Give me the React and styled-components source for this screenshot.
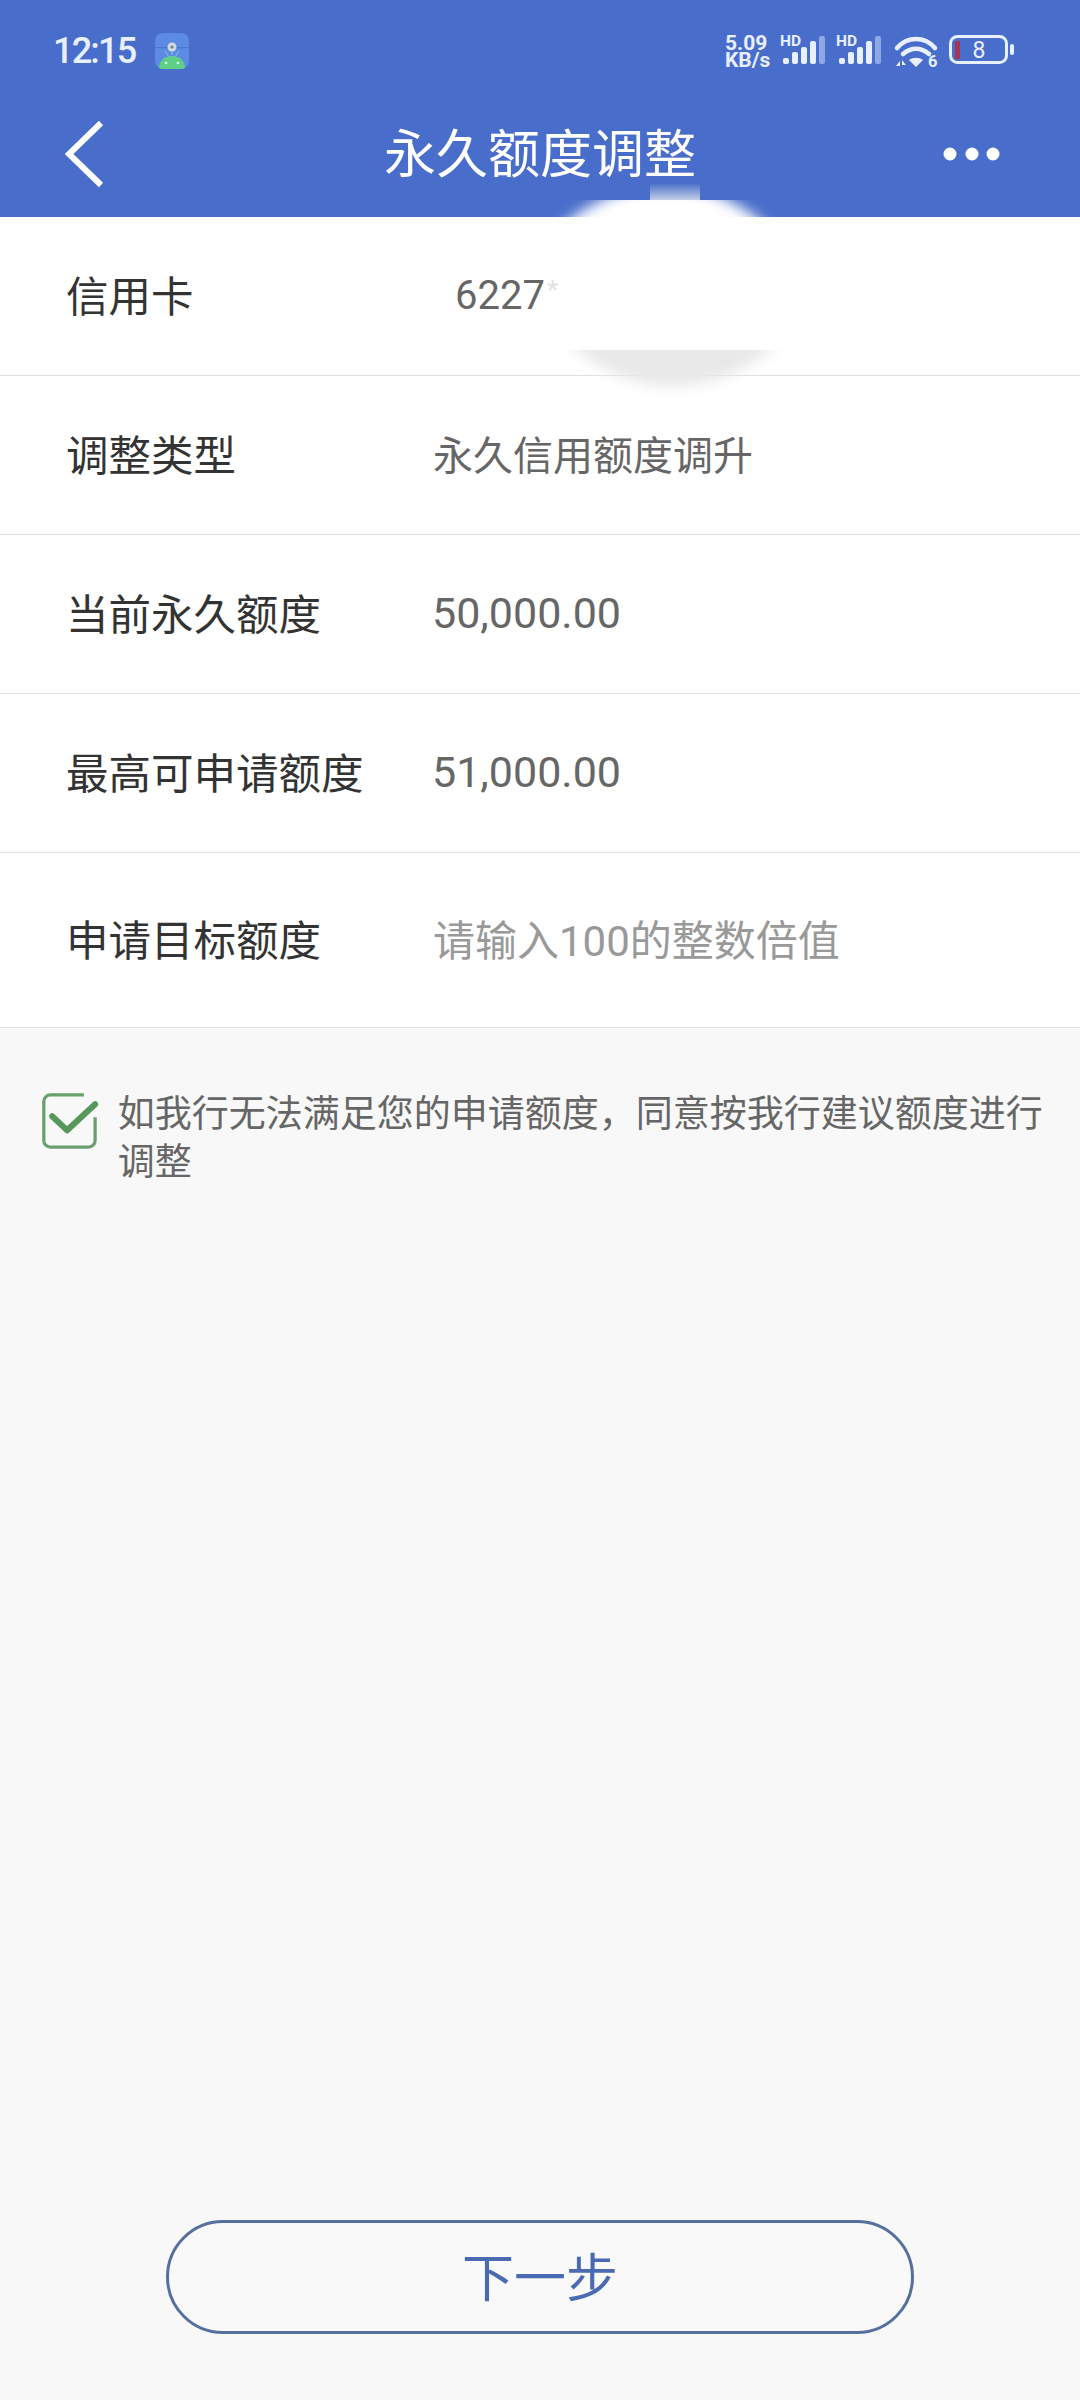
import React from "react";
import styled, { createGlobalStyle } from "styled-components";

const GlobalStyle = createGlobalStyle`
  html, body {
    margin: 0;
    padding: 0;
    background: #f8f8f8;
    font-family: "Noto Sans CJK SC", "Noto Sans", sans-serif;
  }
`;

const Page = styled.div`
  position: relative;
  width: 1080px;
  height: 2400px;
  display: flex;
  flex-direction: column;
  background: #f8f8f8;
  overflow: hidden;
`;

const Header = styled.header`
  height: 217px;
  flex-shrink: 0;
  box-sizing: border-box;
  background: #486dca;
  color: #fff;
  display: flex;
  flex-direction: column;
`;

const StatusBar = styled.div`
  height: 100px;
  box-sizing: border-box;
  padding: 30px 65px 0 53px;
  display: flex;
  align-items: flex-start;
  justify-content: space-between;
`;

const StatusLeft = styled.div`
  display: flex;
  align-items: center;
  gap: 20px;
`;

const Time = styled.span`
  font-family: Roboto, sans-serif;
  font-weight: 500;
  font-size: 36px;
  line-height: 42px;
  letter-spacing: -1.8px;
  color: #e8efff;
`;

const StatusRight = styled.div`
  display: flex;
  align-items: flex-start;
  gap: 10px;
  padding-top: 5px;
`;

const Speed = styled.div`
  font-family: Roboto, sans-serif;
  font-weight: 700;
  font-size: 21px;
  line-height: 17px;
  color: #e8efff;
  width: 45px;
  white-space: nowrap;
`;

const StatusIcon = styled.svg`
  margin-top: -6px;
  flex-shrink: 0;
`;

const NavBar = styled.div`
  flex: 1;
  position: relative;
  display: flex;
  align-items: center;
  justify-content: space-between;
  padding: 0 79px 9px 65px;
`;

const NavTitle = styled.h1`
  position: absolute;
  left: 0;
  right: 0;
  top: 19px;
  margin: 0;
  text-align: center;
  font-size: 52px;
  line-height: 64px;
  font-weight: 400;
`;

const Rows = styled.section`
  background: #fff;
`;

const Row = styled.div`
  height: ${(p) => p.$height || 159}px;
  box-sizing: border-box;
  border-bottom: 1.5px solid #e0e0e0;
  padding: 0 0 5px 66px;
  display: flex;
  align-items: center;
`;

const Label = styled.div`
  width: 367px;
  font-size: 42.5px;
  color: #333;
  white-space: nowrap;
`;

const Value = styled.div`
  font-family: Roboto, "Noto Sans CJK SC", sans-serif;
  font-size: ${(p) => p.$size || 40}px;
  color: ${(p) => (p.$placeholder ? "#999" : "#666")};
  padding-left: ${(p) => p.$indent || 0}px;
  padding-top: ${(p) => (p.$digits ? 3 : 0)}px;
  margin-left: ${(p) => (p.$digits ? -1 : 0)}px;
  white-space: nowrap;
`;

const Star = styled.span`
  color: #e2e2e2;
  font-size: 26px;
  vertical-align: 10px;
  margin-left: 2px;
`;

const Agreement = styled.div`
  display: flex;
  align-items: flex-start;
  padding: 62px 30px 0 41px;
  gap: 19px;
`;

const AgreementText = styled.p`
  margin: -3px 0 0;
  font-size: 37px;
  line-height: 48px;
  color: #666;
`;

const Footer = styled.div`
  margin-top: auto;
  padding-bottom: 66px;
  display: flex;
  justify-content: center;
`;

const NextButton = styled.button`
  width: 748px;
  height: 114px;
  box-sizing: border-box;
  border: 3px solid #55709f;
  border-radius: 57px;
  background: #f9f9fa;
  color: #4a6bb2;
  font-family: inherit;
  font-size: 52px;
  padding: 0 0 6px;
`;

const Smudge = styled.svg`
  position: absolute;
  left: 0;
  top: 0;
  pointer-events: none;
`;

const AppIcon = () => (
  <svg width="34" height="36" viewBox="0 0 34 36">
    <defs>
      <clipPath id="iconClip">
        <rect x="0" y="0" width="34" height="36" rx="8" />
      </clipPath>
    </defs>
    <g clipPath="url(#iconClip)">
      <rect width="34" height="36" fill="#5b8be2" />
      <rect y="14" width="34" height="1.2" fill="#4a78cc" />
      <path d="M10 18l4 6M24 18l-4 6M17 18v4" stroke="#8fc7d8" strokeWidth="1" />
      <circle cx="17" cy="14" r="4.5" fill="#d3d8df" />
      <circle cx="17" cy="14" r="1.6" fill="#6a7f9c" />
      <path d="M4 36c0-8 5-13 13-13s13 5 13 13z" fill="#5fcf86" />
      <circle cx="11" cy="30" r="1.3" fill="#dff5e6" />
      <circle cx="23" cy="30" r="1.3" fill="#dff5e6" />
    </g>
  </svg>
);

const Signal = () => (
  <StatusIcon width="46" height="36" viewBox="0 -6 46 36">
    <text x="0" y="11" fontFamily="Roboto, sans-serif" fontWeight="700" fontSize="15.5" fill="#e8efff">
      HD
    </text>
    <rect x="3" y="23" width="6" height="6" rx="2" fill="#e8efff" />
    <rect x="12" y="17" width="6" height="12" rx="2" fill="#e8efff" />
    <rect x="21" y="12" width="6" height="17" rx="2" fill="#e8efff" />
    <rect x="30" y="6" width="6" height="23" rx="2" fill="#e8efff" />
    <rect x="39" y="1" width="6" height="28" rx="2" fill="#8fa8e4" />
  </StatusIcon>
);

const Wifi = () => (
  <StatusIcon width="47" height="42" viewBox="0 -6 47 42">
    <g fill="none" stroke="#e8efff" strokeWidth="4.5" strokeLinecap="round">
      <path d="M5 13C15 1 33 1 43 13" />
      <path d="M11 19c8-7 18-7 26 0" />
    </g>
    <path d="M17 25c4-3 10-3 14 0l-7 7z" fill="#e8efff" />
    <path d="M4 31l4-5v5zM10 25l4 5h-4z" fill="#e8efff" />
    <text x="36" y="32" fontFamily="Roboto, sans-serif" fontWeight="700" fontSize="16.5" fill="#e8efff">
      6
    </text>
  </StatusIcon>
);

const Battery = () => (
  <svg width="66" height="30" viewBox="0 0 66 30">
    <rect x="1.5" y="1.5" width="56" height="26" rx="7" fill="none" stroke="#e8efff" strokeWidth="3" />
    <rect x="6" y="6" width="5" height="18" fill="#a93450" />
    <text x="30" y="23" textAnchor="middle" fontFamily="Roboto, sans-serif" fontSize="23" fill="#e8efff">
      8
    </text>
    <rect x="61" y="9" width="4" height="11" rx="2" fill="#e8efff" />
  </svg>
);

const BackIcon = () => (
  <svg width="40" height="68" viewBox="0 0 40 68">
    <path d="M36 3L4 34l32 31" fill="none" stroke="#fff" strokeWidth="6" />
  </svg>
);

const MoreIcon = () => (
  <svg width="58" height="16" viewBox="0 0 58 16">
    <circle cx="7" cy="8" r="6.5" fill="#fff" />
    <circle cx="29" cy="8" r="6.5" fill="#fff" />
    <circle cx="50" cy="8" r="6.5" fill="#fff" />
  </svg>
);

const CheckIcon = () => (
  <svg width="62" height="62" viewBox="0 0 62 62">
    <path
      d="M46 3H10a7 7 0 0 0-7 7v42a7 7 0 0 0 7 7h41a7 7 0 0 0 7-7V27"
      fill="none"
      stroke="#6aa06e"
      strokeWidth="3.5"
    />
    <path d="M12 26l16 15L58 13" fill="none" stroke="#56985b" strokeWidth="6.5" strokeLinecap="round" strokeLinejoin="round" />
  </svg>
);

const App = () => {
  return (
    <Page>
      <GlobalStyle />
      <Header>
        <StatusBar>
          <StatusLeft>
            <Time>12:15</Time>
            <AppIcon />
          </StatusLeft>
          <StatusRight>
            <Speed>
              5.09
              <br />
              KB/s
            </Speed>
            <Signal />
            <Signal />
            <Wifi />
            <Battery />
          </StatusRight>
        </StatusBar>
        <NavBar>
          <BackIcon />
          <NavTitle>永久额度调整</NavTitle>
          <MoreIcon />
        </NavBar>
      </Header>
      <Rows>
        <Row>
          <Label>信用卡</Label>
          <Value $indent={23} $digits>
            6227<Star>*</Star>
          </Value>
        </Row>
        <Row>
          <Label>调整类型</Label>
          <Value>永久信用额度调升</Value>
        </Row>
        <Row>
          <Label>当前永久额度</Label>
          <Value $size={43} $digits>
            50,000.00
          </Value>
        </Row>
        <Row>
          <Label>最高可申请额度</Label>
          <Value $size={43} $digits>
            51,000.00
          </Value>
        </Row>
        <Row $height={175}>
          <Label>申请目标额度</Label>
          <Value $size={42} $placeholder>
            请输入100的整数倍值
          </Value>
        </Row>
      </Rows>
      <Agreement>
        <CheckIcon />
        <AgreementText>如我行无法满足您的申请额度，同意按我行建议额度进行调整</AgreementText>
      </Agreement>
      <Footer>
        <NextButton>下一步</NextButton>
      </Footer>
      {/* the blur left over the card number in the photo */}
      <Smudge width="1080" height="420" viewBox="0 0 1080 420">
        <defs>
          <filter id="soft" x="-30%" y="-60%" width="160%" height="220%">
            <feGaussianBlur stdDeviation="7" />
          </filter>
          <clipPath id="domeClip">
            <rect x="500" y="200" width="340" height="30" />
          </clipPath>
          <clipPath id="shadeClip">
            <rect x="500" y="350" width="340" height="70" />
          </clipPath>
          <linearGradient id="tab" x1="0" y1="0" x2="0" y2="1">
            <stop offset="0" stopColor="#486dca" />
            <stop offset="1" stopColor="#c4cee4" />
          </linearGradient>
        </defs>
        <rect x="650" y="183" width="50" height="17" fill="url(#tab)" />
        <g clipPath="url(#domeClip)">
          <path d="M556 232C590 200 625 186 665 186S740 200 772 232z" fill="#fff" filter="url(#soft)" />
        </g>
        <g clipPath="url(#shadeClip)">
          <path d="M566 340H780C750 372 710 386 672 386S600 372 566 340z" fill="#e8e8e8" filter="url(#soft)" />
        </g>
      </Smudge>
    </Page>
  );
};

export default App;
